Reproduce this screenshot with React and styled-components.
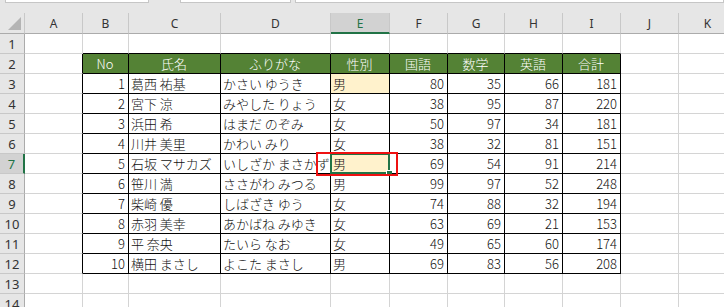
import React from 'react';
import styled, { createGlobalStyle } from 'styled-components';

const GlobalStyle = createGlobalStyle`
  html, body {
    margin: 0;
    padding: 0;
    background: #ffffff;
    overflow: hidden;
  }
  body {
    font-family: "Noto Sans CJK JP", "Noto Sans", sans-serif;
  }
`;

const COLS = ['A', 'B', 'C', 'D', 'E', 'F', 'G', 'H', 'I', 'J', 'K'];
const WIDTHS = [58, 46, 92, 110, 59, 58, 57, 58, 58, 58, 58];

const HEADERS = ['No', '氏名', 'ふりがな', '性別', '国語', '数学', '英語', '合計'];

const ROWS = [
    [1, '葛西 祐基', 'かさい ゆうき', '男', 80, 35, 66, 181],
    [2, '宮下 涼', 'みやした りょう', '女', 38, 95, 87, 220],
    [3, '浜田 希', 'はまだ のぞみ', '女', 50, 97, 34, 181],
    [4, '川井 美里', 'かわい みり', '女', 38, 32, 81, 151],
    [5, '石坂 マサカズ', 'いしざか まさかず', '男', 69, 54, 91, 214],
    [6, '笹川 満', 'ささがわ みつる', '男', 99, 97, 52, 248],
    [7, '柴崎 優', 'しばざき ゆう', '女', 74, 88, 32, 194],
    [8, '赤羽 美幸', 'あかばね みゆき', '女', 63, 69, 21, 153],
    [9, '平 奈央', 'たいら なお', '女', 49, 65, 60, 174],
    [10, '横田 まさし', 'よこた まさし', '男', 69, 83, 56, 208],
];

// highlighted cells (sheet row, column index)
const YELLOW = ['3-4', '7-4'];
const SELECTED = { row: 7, col: 4 };

const Window = styled.div`
    width: 724px;
    height: 307px;
    overflow: hidden;
    background: #ffffff;
`;

const FormulaStrip = styled.div`
    height: 13px;
    background: #e6e6e6;
    display: flex;
    align-items: flex-start;
    padding-left: 5px;
`;

const FieldBox = styled.div`
    height: 2px;
    width: ${p => p.$width}px;
    flex: ${p => (p.$grow ? 1 : 'none')};
    margin-right: ${p => p.$gap || 0}px;
    background: #ffffff;
    border: 1px solid #c6c6c6;
    border-top: none;
`;

const Sheet = styled.div`
    display: grid;
    grid-template-columns: 25px ${WIDTHS.map(w => w + 'px').join(' ')};
    grid-template-rows: 21px;
    grid-auto-rows: 20px;
    width: max-content;
`;

const Corner = styled.div`
    box-sizing: border-box;
    background: #e6e6e6;
    border-right: 1px solid #c8c8c8;
    border-bottom: 1px solid #ababab;
    position: relative;
    overflow: hidden;

    &::after {
        content: '';
        position: absolute;
        right: 3px;
        bottom: 3px;
        border-style: solid;
        border-width: 0 0 13px 13px;
        border-color: transparent transparent #b4b4b4 transparent;
    }
`;

const ColHead = styled.div`
    box-sizing: border-box;
    display: flex;
    align-items: center;
    justify-content: center;
    padding-top: 1px;
    font-family: "Noto Sans", "Liberation Sans", sans-serif;
    font-size: 12px;
    color: ${p => (p.$active ? '#217346' : '#333333')};
    background: ${p => (p.$active ? '#d2d2d2' : '#e6e6e6')};
    border-right: 1px solid #c8c8c8;
    border-bottom: ${p => (p.$active ? '2px solid #217346' : '1px solid #ababab')};
`;

const RowHead = styled.div`
    box-sizing: border-box;
    display: flex;
    align-items: center;
    justify-content: center;
    font-family: "Noto Sans", "Liberation Sans", sans-serif;
    font-size: 13px;
    color: ${p => (p.$active ? '#217346' : '#333333')};
    background: ${p => (p.$active ? '#d2d2d2' : '#e6e6e6')};
    border-bottom: 1px solid #c8c8c8;
    border-right: ${p => (p.$active ? '2px solid #217346' : '1px solid #ababab')};
`;

const Cell = styled.div`
    box-sizing: border-box;
    position: relative;
    display: flex;
    align-items: center;
    justify-content: ${p => (p.$align === 'right' ? 'flex-end' : p.$align === 'center' ? 'center' : 'flex-start')};
    padding: 0 3px 0 2px;
    font-size: 13px;
    font-weight: 300;
    white-space: nowrap;
    color: ${p => (p.$head ? '#ffffff' : '#111111')};
    background: ${p => (p.$head ? '#548235' : p.$yellow ? '#fff2cc' : '#ffffff')};
    border-right: 1px solid ${p => (p.$rightDark ? '#000000' : '#d4d4d4')};
    border-bottom: 1px solid ${p => (p.$bottomDark ? '#000000' : '#d4d4d4')};
`;

const Selection = styled.div`
    position: absolute;
    inset: -1px;
    border: 2px solid #217346;
    pointer-events: none;
    z-index: 2;
`;

const FillHandle = styled.span`
    position: absolute;
    right: -4px;
    bottom: -4px;
    width: 5px;
    height: 5px;
    background: #217346;
    border-left: 1px solid #ffffff;
    border-top: 1px solid #ffffff;
`;

const Callout = styled.div`
    position: absolute;
    left: -15px;
    top: -2px;
    width: 82px;
    height: 24px;
    box-sizing: border-box;
    border: 2px solid #ee1111;
    pointer-events: none;
    z-index: 3;
`;

const inTable = (r, c) => r >= 2 && r <= 12 && c >= 1 && c <= 8;

function cellValue(r, c) {
    if (c < 1 || c > 8) return null;
    if (r === 2) return HEADERS[c - 1];
    if (r >= 3 && r <= 12) return ROWS[r - 3][c - 1];
    return null;
}

export default function App() {
    const sheetRows = Array.from({ length: 14 }, (_, i) => i + 1);

    return (
        <Window>
            <GlobalStyle />
            <FormulaStrip>
                <FieldBox $width={142} $gap={31} />
                <FieldBox $width={109} $gap={4} />
                <FieldBox $grow />
            </FormulaStrip>
            <Sheet>
                <Corner />
                {COLS.map((col, c) => (
                    <ColHead key={col} $active={c === SELECTED.col}>{col}</ColHead>
                ))}
                {sheetRows.map(r => (
                    <React.Fragment key={r}>
                        <RowHead $active={r === SELECTED.row}>{r}</RowHead>
                        {COLS.map((col, c) => {
                            const value = cellValue(r, c);
                            const isHead = r === 2 && inTable(r, c);
                            const isNumber = typeof value === 'number';
                            const isSelected = r === SELECTED.row && c === SELECTED.col;
                            return (
                                <Cell
                                    key={col + r}
                                    $head={isHead}
                                    $yellow={YELLOW.includes(`${r}-${c}`)}
                                    $align={isHead ? 'center' : isNumber ? 'right' : 'left'}
                                    $rightDark={inTable(r, c) || inTable(r, c + 1)}
                                    $bottomDark={inTable(r, c) || inTable(r + 1, c)}
                                >
                                    {value}
                                    {isSelected && (
                                        <>
                                            <Selection>
                                                <FillHandle />
                                            </Selection>
                                            <Callout />
                                        </>
                                    )}
                                </Cell>
                            );
                        })}
                    </React.Fragment>
                ))}
            </Sheet>
        </Window>
    );
}
